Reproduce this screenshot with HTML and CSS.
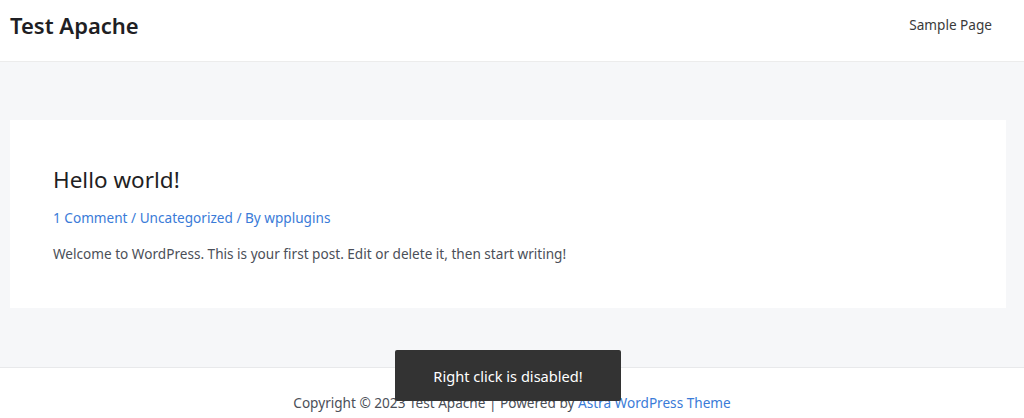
FILE: index.html
```html
<!DOCTYPE html>
<html lang="en">
<head>
<meta charset="utf-8">
<title>Test Apache</title>
<link rel="stylesheet" href="styles.css">
</head>
<body>
<header class="site-header">
  <div class="site-title">Test Apache</div>
  <nav class="site-nav"><a href="#">Sample Page</a></nav>
</header>
<main class="site-main">
  <article class="post-card">
    <h2 class="post-title">Hello world!</h2>
    <div class="post-meta"><a href="#">1 Comment</a> / <a href="#">Uncategorized</a> / By <a href="#">wpplugins</a></div>
    <p class="post-text">Welcome to WordPress. This is your first post. Edit or delete it, then start writing!</p>
  </article>
</main>
<footer class="site-footer">
  <div class="copyright">Copyright © 2023 Test Apache | Powered by <a href="#">Astra WordPress Theme</a></div>
</footer>
<div class="toast">Right click is disabled!</div>
</body>
</html>
```
FILE: styles.css
```css
html, body { margin: 0; padding: 0; overflow: hidden; }
body {
  font-family: "Noto Sans", "Open Sans", sans-serif;
  font-size: 13.6px;
  color: #4b4f58;
  background: #fff;
  height: 418px;
}
a { text-decoration: none; color: #3a7bd8; }
.site-header {
  height: 62px;
  border-bottom: 1px solid #ececec;
  display: flex;
  align-items: flex-start;
  justify-content: space-between;
  padding: 10px 32px 0 10px;
  box-sizing: border-box;
}
.site-title {
  font-size: 22px;
  line-height: 30px;
  font-weight: 600;
  color: #1f1f24;
}
.site-nav { line-height: 30px; }
.site-nav a { color: #3a3a3a; font-size: 13.6px; }
.site-main {
  background: #f6f7f9;
  padding: 58px 18px 59px 10px;
}
.post-card {
  background: #fff;
  padding: 44px 43px 43px;
}
.post-title {
  margin: 0;
  font-size: 22.5px;
  font-weight: 400;
  color: #1f1f24;
  line-height: 32px;
}
.post-meta { margin-top: 11px; line-height: 22px; font-size: 13.6px; color: #3a7bd8; }
.post-text { margin: 14px 0 0; line-height: 22px; }
.site-footer {
  border-top: 1px solid #e8e9eb;
  padding-top: 25px;
  text-align: center;
}
.copyright { line-height: 20px; }
.toast {
  position: absolute;
  left: 395px;
  top: 350px;
  width: 226px;
  height: 51px;
  background: #333;
  color: #fff;
  border-radius: 2px;
  display: flex;
  align-items: center;
  justify-content: center;
  font-size: 14.6px;
}
```
